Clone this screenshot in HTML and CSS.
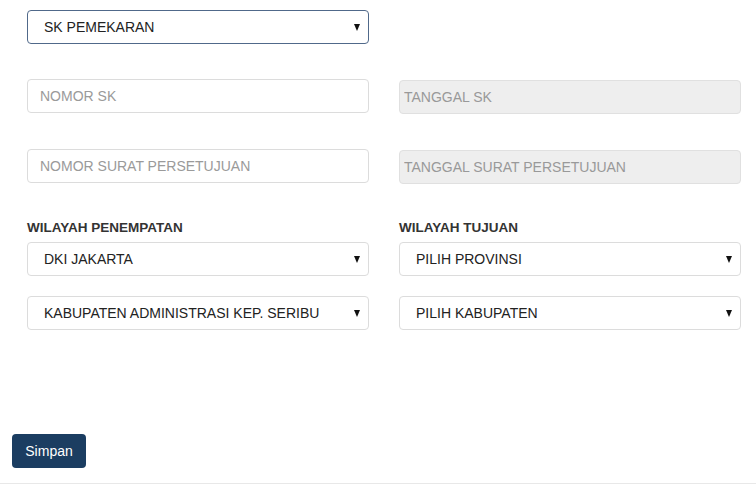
FILE: index.html
```html
<!DOCTYPE html>
<html lang="en">
<head>
  <meta charset="UTF-8" />
  <meta name="viewport" content="width=device-width, initial-scale=1.0" />
  <title>SK Pemekaran</title>
  <link rel="stylesheet" href="styles.css">
</head>
<body>
  <form class="page">
    <div class="grid row-jenis">
      <div class="select-wrap">
        <select class="form-select focused">
          <option>SK PEMEKARAN</option>
        </select>
      </div>
    </div>

    <div class="grid row-sk">
      <input class="form-input" type="text" placeholder="NOMOR SK">
      <input class="form-input disabled" type="text" placeholder="TANGGAL SK" disabled>
    </div>

    <div class="grid row-surat">
      <input class="form-input" type="text" placeholder="NOMOR SURAT PERSETUJUAN">
      <input class="form-input disabled" type="text" placeholder="TANGGAL SURAT PERSETUJUAN" disabled>
    </div>

    <div class="grid row-wilayah">
      <div class="col">
        <label class="label">WILAYAH PENEMPATAN</label>
        <div class="select-wrap">
          <select class="form-select">
            <option>DKI JAKARTA</option>
          </select>
        </div>
        <div class="select-wrap">
          <select class="form-select">
            <option>KABUPATEN ADMINISTRASI KEP. SERIBU</option>
          </select>
        </div>
      </div>
      <div class="col">
        <label class="label">WILAYAH TUJUAN</label>
        <div class="select-wrap">
          <select class="form-select">
            <option>PILIH PROVINSI</option>
          </select>
        </div>
        <div class="select-wrap">
          <select class="form-select">
            <option>PILIH KABUPATEN</option>
          </select>
        </div>
      </div>
    </div>

    <div class="actions">
      <button type="button" class="btn">Simpan</button>
    </div>
  </form>
  <div class="footer-line"></div>
</body>
</html>
```

FILE: styles.css
```css
body {
  margin: 0;
  font-family: "Liberation Sans", Arial, sans-serif;
  font-size: 14px;
  color: #333;
  background: #fff;
}
.page {
  padding: 10px 0 0 12px;
  margin: 0;
}
.grid {
  display: grid;
  grid-template-columns: 342px 342px;
  column-gap: 30px;
  padding: 0 15px;
}
.row-jenis { margin-bottom: 35px; }
.row-sk { margin-bottom: 35px; }
.row-surat { margin-bottom: 35px; }

.col {
  display: flex;
  flex-direction: column;
}
.label {
  display: block;
  font-size: 13.5px;
  font-weight: bold;
  line-height: 17px;
  color: #333;
  margin-bottom: 6px;
}
.col .select-wrap + .select-wrap {
  margin-top: 20px;
}

.select-wrap {
  position: relative;
}
.select-wrap::after {
  content: "";
  position: absolute;
  right: 9px;
  top: 14px;
  width: 0;
  height: 0;
  border-left: 3.5px solid transparent;
  border-right: 3.5px solid transparent;
  border-top: 7px solid #111;
  pointer-events: none;
}
.form-select {
  -webkit-appearance: none;
  appearance: none;
  display: block;
  width: 100%;
  height: 34px;
  box-sizing: border-box;
  padding: 0 30px 0 16px;
  font-family: inherit;
  font-size: 14px;
  color: #222;
  background: #fff;
  border: 1px solid #dcdcdc;
  border-radius: 4px;
  outline: none;
}
.form-select.focused {
  border-color: #50698a;
}

.form-input {
  display: block;
  width: 100%;
  height: 34px;
  box-sizing: border-box;
  padding: 0 12px;
  font-family: inherit;
  font-size: 14px;
  color: #333;
  background: #fff;
  border: 1px solid #dcdcdc;
  border-radius: 4px;
  outline: none;
}
.form-input::placeholder {
  color: #9a9a9a;
}
.form-input.disabled {
  margin-top: 1px;
  padding: 0 4px;
  background: #eee;
  border-color: #e0e0e0;
}
.form-input.disabled::placeholder {
  color: #999;
}

.actions {
  margin-top: 104px;
  padding-bottom: 15px;
}
.btn {
  display: block;
  width: 74px;
  height: 34px;
  padding: 0;
  font-family: inherit;
  font-size: 14px;
  color: #fff;
  background: #1b3d61;
  border: 0;
  border-radius: 4px;
  cursor: pointer;
}
.footer-line {
  border-top: 1px solid #e8e8e8;
}
```
